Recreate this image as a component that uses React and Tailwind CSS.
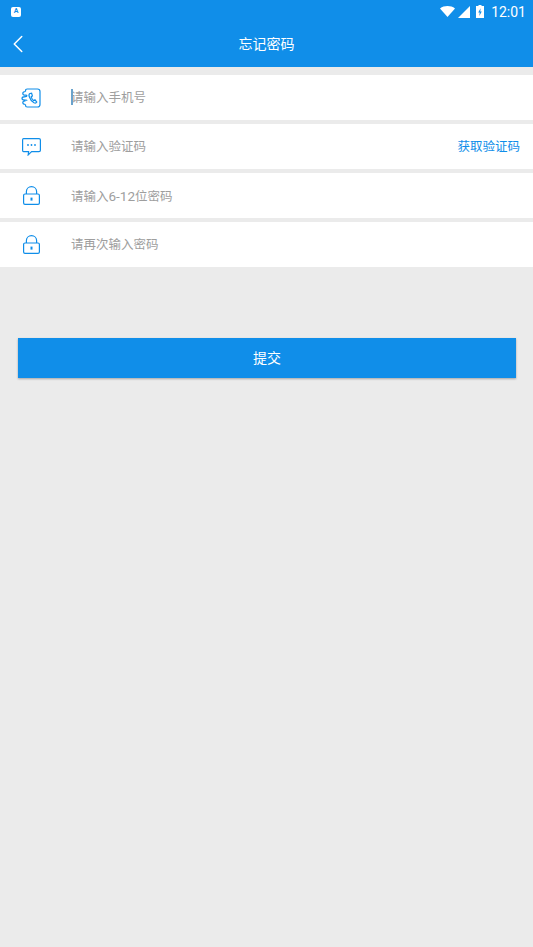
import { ChevronLeft } from 'lucide-react';

const BLUE = '#108ee9';

function PhoneBookIcon() {
    return (
        <svg width="20" height="20" viewBox="0 0 20 20" fill="none" stroke={BLUE} strokeWidth="1.2">
            <path d="M4.5 3.5V2.8C4.5 1.8 5.2 1 6.2 1H16.5C18 1 19 2 19 3.5V16.5C19 18 18 19 16.5 19H6.2C5.2 19 4.5 18.2 4.5 17.2V16.5" />
            <path d="M9 5.5C8 6 7.7 7 8.2 8.5C9 11 11 13.7 13 14.8C14.2 15.4 15.3 15 15.8 14L14 11.8L12.6 12.6C11.6 11.8 10.6 10.2 10.2 8.8L11.4 8L10.6 5.2Z" />
            <path d="M4.5 3.5C3 3.5 1.8 4.3 1.8 5.4C1.8 6.5 3 7.2 4.5 7.2C6 7.2 6 8 6 8M6 8C6 8 5.5 8.6 4.5 8.6C2.5 8.6 1 9.4 1 10.4C1 11.4 2.5 12 4.5 12M4.5 12C6 12 6 12.8 6 12.8M4.5 12.8C3 12.8 1.8 13.6 1.8 14.6C1.8 15.6 3 16.5 4.5 16.5" />
        </svg>
    );
}

function MessageIcon() {
    return (
        <svg width="19" height="18" viewBox="0 0 19 18" fill="none" stroke={BLUE} strokeWidth="1.2">
            <path d="M1.5 0.6H17C17.8 0.6 18.4 1.2 18.4 2V12.2C18.4 13 17.8 13.6 17 13.6H9.6L6.2 16.9L6.6 13.6H1.5C0.9 13.6 0.6 13 0.6 12.2V2C0.6 1.2 0.9 0.6 1.5 0.6Z" />
            <circle cx="6" cy="7" r="0.9" fill={BLUE} stroke="none" />
            <circle cx="9.5" cy="7" r="0.9" fill={BLUE} stroke="none" />
            <circle cx="13" cy="7" r="0.9" fill={BLUE} stroke="none" />
        </svg>
    );
}

function LockIcon() {
    return (
        <svg width="17" height="19" viewBox="0 0 17 19" fill="none" stroke={BLUE} strokeWidth="1.2">
            <rect x="0.6" y="8" width="15.8" height="10.4" rx="1.4" />
            <path d="M3.4 8V5.6C3.4 2.8 5.6 0.7 8.5 0.7C11.4 0.7 13.6 2.8 13.6 5.6V8" />
            <path d="M8.5 11.6V14.6" strokeWidth="2" />
        </svg>
    );
}

function StatusBar() {
    return (
        <div className="h-[23px] flex items-center justify-between pl-[11px] pr-[7px]">
            <div className="w-[10px] h-[10px] rounded-[2px] bg-white flex items-center justify-center text-[7px] font-bold leading-none text-[#108ee9] font-['Roboto',sans-serif]">
                A
            </div>
            <div className="flex items-center text-white">
                <svg width="15" height="11" viewBox="0 0 15 11" className="mr-[3px]">
                    <path d="M0 2.4C4.2 -0.8 10.8 -0.8 15 2.4L7.5 11Z" fill="#fff" />
                </svg>
                <svg width="12" height="12" viewBox="0 0 12 12" className="mr-[6px]">
                    <path d="M12 0V12H0Z" fill="#fff" />
                </svg>
                <svg width="8" height="13" viewBox="0 0 8 13" className="mr-[7px]">
                    <path d="M2.5 0H5.5V1H8V13H0V1H2.5Z" fill="#fff" />
                    <path d="M4.6 3.2L2.2 7.6H3.7L3.3 11L5.8 6.4H4.3Z" fill="#108ee9" />
                </svg>
                <span className="text-[14px] leading-none font-['Roboto',sans-serif]">12:01</span>
            </div>
        </div>
    );
}

function Row({ icon, placeholder, cursor, action }) {
    return (
        <div className="h-[45px] bg-white flex items-center">
            <div className="w-[62px] flex justify-center shrink-0">{icon}</div>
            <div className="flex-1 ml-[9px] pt-[2px] flex items-center relative text-[12.5px] text-[#9e9e9e]">
                {cursor && <span className="absolute left-0 top-[2px] w-[2px] h-[16px] bg-[#6aa3cc]"></span>}
                {placeholder}
            </div>
            {action && <span className="pt-[2px] text-[12.5px] text-[#108ee9] mr-[13px]">{action}</span>}
        </div>
    );
}

function App() {
    return (
        <div className="w-[533px] h-[947px] bg-[#ebebeb] font-['Roboto','Noto_Sans_CJK_SC',sans-serif]">
            <div className="h-[67px] bg-[#108ee9]">
                <StatusBar />
                <div className="h-[43px] relative flex items-center justify-center">
                    <ChevronLeft className="absolute left-[3px] top-[6px] text-white" size={30} strokeWidth={1.2} />
                    <span className="text-[14px] text-white">忘记密码</span>
                </div>
            </div>
            <div className="pt-[8px] flex flex-col gap-[4px]">
                <Row icon={<PhoneBookIcon />} placeholder="请输入手机号" cursor />
                <Row icon={<MessageIcon />} placeholder="请输入验证码" action="获取验证码" />
                <Row
                    icon={<LockIcon />}
                    placeholder={
                        <span>
                            请输入<span className="text-[13.5px]">6-12</span>位密码
                        </span>
                    }
                />
                <Row icon={<LockIcon />} placeholder="请再次输入密码" />
            </div>
            <div className="mt-[71px] ml-[18px] mr-[17px]">
                <button className="w-full h-[40px] bg-[#108ee9] text-white text-[14px] shadow-[0_1px_2px_rgba(0,0,0,0.3)]">
                    提交
                </button>
            </div>
        </div>
    );
}

export default App;
